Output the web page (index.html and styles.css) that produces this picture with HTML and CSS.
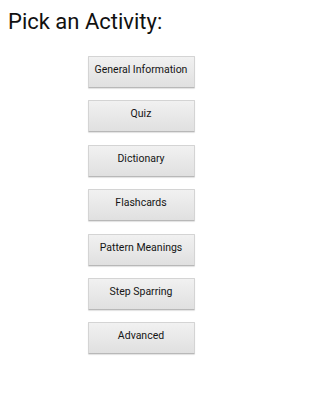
FILE: index.html
```html
<!DOCTYPE html>
<html>
<head>
<meta charset="utf-8">
<link rel="stylesheet" href="styles.css">
</head>
<body>
<div class="screen">
  <h1 class="title">Pick an Activity:</h1>
  <div class="menu">
    <button class="btn">General Information</button>
    <button class="btn">Quiz</button>
    <button class="btn">Dictionary</button>
    <button class="btn">Flashcards</button>
    <button class="btn">Pattern Meanings</button>
    <button class="btn">Step Sparring</button>
    <button class="btn">Advanced</button>
  </div>
</div>
</body>
</html>
```
FILE: styles.css
```css
html, body {
  margin: 0;
  padding: 0;
  background: #ffffff;
}
.screen {
  width: 284px;
  height: 400px;
  font-family: Roboto, "Liberation Sans", sans-serif;
  color: #111;
}
.title {
  margin: 0;
  padding: 8px 0 0 8px;
  font-size: 22px;
  font-weight: 400;
  line-height: 28px;
  color: #111;
}
.menu {
  display: flex;
  flex-direction: column;
  align-items: center;
  gap: 12.4px;
  padding-top: 20px;
  padding-right: 2px;
}
.btn {
  width: 107px;
  height: 32px;
  box-sizing: border-box;
  border: 1px solid #d4d4d4;
  border-bottom-color: #b8b8b8;
  border-radius: 1px;
  background: linear-gradient(#f1f1f1, #e0e0e0);
  box-shadow: 0 1px 1px rgba(0,0,0,0.12);
  font-family: Roboto, "Liberation Sans", sans-serif;
  font-size: 10.5px;
  color: #151515;
  padding: 0 0 5px 0;
}
```
